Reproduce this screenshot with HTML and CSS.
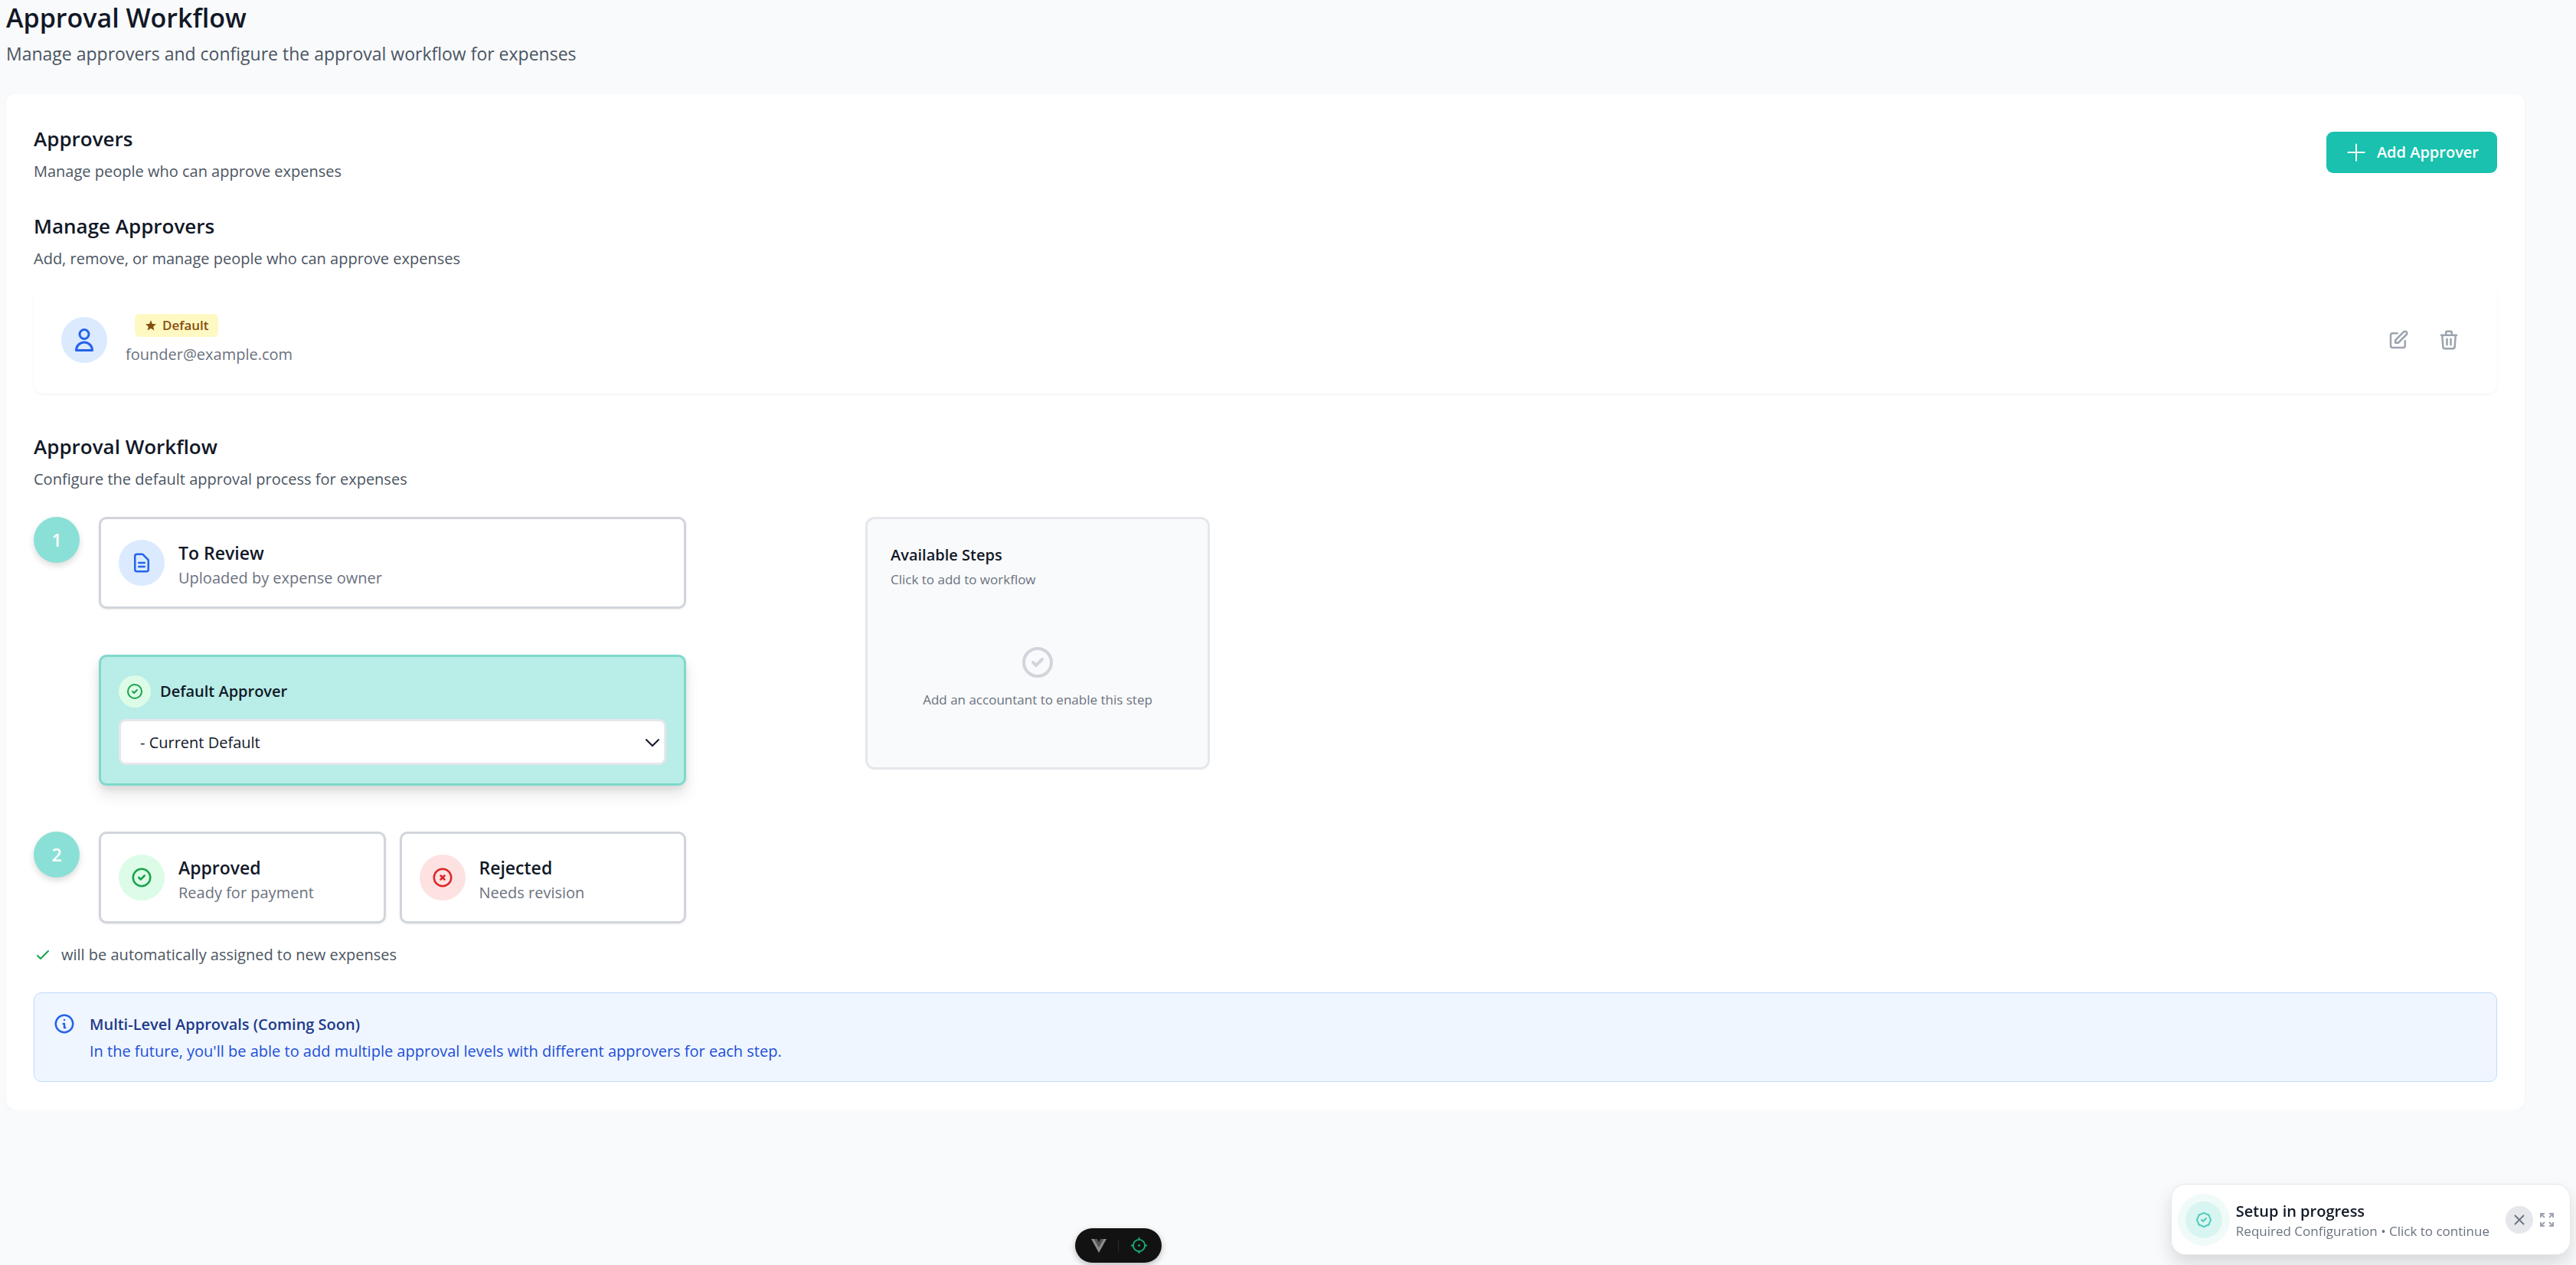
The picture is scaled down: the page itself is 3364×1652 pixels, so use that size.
FILE: index.html
```html
<!DOCTYPE html>
<html lang="en">
<head>
  <meta charset="UTF-8">
  <meta name="viewport" content="width=device-width, initial-scale=1.0">
  <title>Approval Workflow</title>
  <link rel="stylesheet" href="styles.css">
</head>
<body>

  <main class="page">
    <header class="page-header">
      <h1>Approval Workflow</h1>
      <p>Manage approvers and configure the approval workflow for expenses</p>
    </header>

    <div class="panel">
      <section class="section-head">
        <div>
          <h2>Approvers</h2>
          <p class="sub">Manage people who can approve expenses</p>
        </div>
        <button type="button" class="btn-primary">
          <svg class="icon" viewBox="0 0 24 24"><path stroke-width="1.6" d="M12 3.5v17M3.5 12h17"/></svg>
          Add Approver
        </button>
      </section>

      <section class="approvers">
        <h2>Manage Approvers</h2>
        <p class="sub">Add, remove, or manage people who can approve expenses</p>

        <div class="approver">
          <span class="avatar person">
            <svg class="icon" viewBox="0 0 24 24"><path d="M16 7a4 4 0 11-8 0 4 4 0 018 0zM12 14a7 7 0 00-7 7h14a7 7 0 00-7-7z"/></svg>
          </span>
          <div class="approver-info">
            <span class="badge">
              <svg viewBox="0 0 24 24"><path d="M12 3l2.6 6.200 6.600.5-5 4.300 1.600 6.500L12 17l-5.800 3.500 1.600-6.500-5-4.300 6.600-.5z"/></svg>
              Default
            </span>
            <span class="email">founder@example.com</span>
          </div>
          <div class="actions">
            <button type="button" aria-label="Edit approver">
              <svg class="icon" viewBox="0 0 24 24"><path d="M11 5H6a2 2 0 00-2 2v11a2 2 0 002 2h11a2 2 0 002-2v-5m-1.414-9.414a2 2 0 112.828 2.828L11.828 15H9v-2.828l8.586-8.586z"/></svg>
            </button>
            <button type="button" aria-label="Delete approver">
              <svg class="icon" viewBox="0 0 24 24"><path d="M19 7l-.867 12.142A2 2 0 0116.138 21H7.862a2 2 0 01-1.995-1.858L5 7m5 4v6m4-6v6m1-10V4a1 1 0 00-1-1h-4a1 1 0 00-1 1v3M4 7h16"/></svg>
            </button>
          </div>
        </div>
      </section>

      <section class="workflow">
        <h2>Approval Workflow</h2>
        <p class="sub">Configure the default approval process for expenses</p>

        <div class="board">
          <div class="steps">
            <span class="number">1</span>
            <div class="step">
              <span class="avatar blue">
                <svg class="icon" viewBox="0 0 24 24"><path d="M9 12h6m-6 4h6m2 5H7a2 2 0 01-2-2V5a2 2 0 012-2h5.586a1 1 0 01.707.293l5.414 5.414a1 1 0 01.293.707V19a2 2 0 01-2 2z"/></svg>
              </span>
              <div class="step-text">
                <h3>To Review</h3>
                <p>Uploaded by expense owner</p>
              </div>
            </div>

            <div class="step-default">
              <label for="approver">
                <span class="avatar green mini">
                  <svg class="icon" viewBox="0 0 24 24"><path d="M9 12l2 2 4-4m6 2a9 9 0 11-18 0 9 9 0 0118 0z"/></svg>
                </span>
                Default Approver
              </label>
              <div class="select-wrap">
                <select id="approver">
                  <option>- Current Default</option>
                </select>
                <svg class="icon" viewBox="0 0 24 24"><path d="M4 8l8 8 8-8"/></svg>
              </div>
            </div>

            <span class="number">2</span>
            <div class="outcomes">
              <div class="step">
                <span class="avatar green">
                  <svg class="icon" viewBox="0 0 24 24"><path d="M9 12l2 2 4-4m6 2a9 9 0 11-18 0 9 9 0 0118 0z"/></svg>
                </span>
                <div class="step-text">
                  <h3>Approved</h3>
                  <p>Ready for payment</p>
                </div>
              </div>
              <div class="step">
                <span class="avatar red">
                  <svg class="icon" viewBox="0 0 24 24"><path d="M10 14l2-2m0 0l2-2m-2 2l-2-2m2 2l2 2m7-2a9 9 0 11-18 0 9 9 0 0118 0z"/></svg>
                </span>
                <div class="step-text">
                  <h3>Rejected</h3>
                  <p>Needs revision</p>
                </div>
              </div>
            </div>
          </div>

          <aside class="available">
            <h3>Available Steps</h3>
            <p>Click to add to workflow</p>
            <div class="empty">
              <svg class="icon" viewBox="0 0 24 24"><path d="M9 12l2 2 4-4m6 2a9 9 0 11-18 0 9 9 0 0118 0z"/></svg>
              <p>Add an accountant to enable this step</p>
            </div>
          </aside>
        </div>

        <p class="assigned">
          <svg class="icon" viewBox="0 0 24 24"><path d="M5 13l4 4L19 7"/></svg>
          will be automatically assigned to new expenses
        </p>

        <div class="notice">
          <svg class="icon" viewBox="0 0 24 24"><path d="M13 16h-1v-4h-1m1-4h.01M21 12a9 9 0 11-18 0 9 9 0 0118 0z"/></svg>
          <div>
            <h4>Multi-Level Approvals (Coming Soon)</h4>
            <p>In the future, you'll be able to add multiple approval levels with different approvers for each step.</p>
          </div>
        </div>
      </section>
    </div>
  </main>

  <div class="setup">
    <span class="setup-icon">
      <svg class="icon" viewBox="0 0 24 24"><path d="M9 12l2 2 4-4M7.835 4.697a3.420 3.420 0 001.946-.806 3.420 3.420 0 014.438 0 3.420 3.420 0 001.946.806 3.420 3.420 0 013.138 3.138 3.420 3.420 0 00.806 1.946 3.420 3.420 0 010 4.438 3.420 3.420 0 00-.806 1.946 3.420 3.420 0 01-3.138 3.138 3.420 3.420 0 00-1.946.806 3.420 3.420 0 01-4.438 0 3.420 3.420 0 00-1.946-.806 3.420 3.420 0 01-3.138-3.138 3.420 3.420 0 00-.806-1.946 3.420 3.420 0 010-4.438 3.420 3.420 0 00.806-1.946 3.420 3.420 0 013.138-3.138z"/></svg>
    </span>
    <div class="setup-text">
      <strong>Setup in progress</strong>
      <span>Required Configuration • Click to continue</span>
    </div>
    <button type="button" class="close" aria-label="Close">
      <svg class="icon" viewBox="0 0 24 24"><path d="M6 18L18 6M6 6l12 12"/></svg>
    </button>
    <button type="button" class="expand" aria-label="Expand">
      <svg viewBox="0 0 18 18"><path d="M1 6V1h5M1 1l5 5M12 1h5v5M17 1l-5 5M1 12v5h5M1 17l5-5M17 12v5h-5M17 17l-5-5"/></svg>
    </button>
  </div>

  <div class="devtools">
    <button type="button" aria-label="Toggle devtools">
      <svg viewBox="0 0 20 18"><path fill="#8b8b8b" d="M0 0h4l6 10.500L16 0h4L10 18z"/><path fill="#555" d="M4 0h3.700L10 4l2.300-4H16l-6 10.500z"/></svg>
    </button>
    <span class="divider"></span>
    <button type="button" aria-label="Inspect component">
      <svg viewBox="0 0 24 24"><g fill="none" stroke="#1aab73" stroke-width="2"><circle cx="12" cy="12" r="8"/><path d="M12 1v4M12 19v4M1 12h4M19 12h4"/></g><circle cx="12" cy="12" r="1.500" fill="#1aab73"/></svg>
    </button>
  </div>

</body>
</html>
```

FILE: styles.css
```css
* {
  box-sizing: border-box;
}

body {
  margin: 0;
  background: #f9fafb;
  color: #111827;
  font-family: "Open Sans", sans-serif;
  font-size: 20px;
  line-height: 30px;
}

h1, h2, h3, h4, p {
  margin: 0;
  font-weight: 600;
}

p {
  font-weight: 400;
}

button {
  font: inherit;
  border: 0;
  padding: 0;
  background: none;
  cursor: pointer;
}

svg {
  display: block;
  flex: none;
}

.icon {
  width: 30px;
  height: 30px;
  fill: none;
  stroke: currentColor;
  stroke-width: 2;
  stroke-linecap: round;
  stroke-linejoin: round;
}

.page {
  padding: 0 67px 0 8px;
}

.page-header h1 {
  font-size: 34px;
  line-height: 46px;
}

.page-header p {
  margin-top: 6px;
  font-size: 23px;
  line-height: 36px;
  color: #4b5563;
}

.panel {
  margin-top: 35px;
  padding: 36px;
  background: #fff;
  border-radius: 12px;
  box-shadow: 0 1px 3px rgba(0, 0, 0, 0.06);
}

h2 {
  font-size: 26px;
  line-height: 44px;
}

.sub {
  margin-top: 6px;
  color: #4b5563;
}

.section-head {
  display: flex;
  justify-content: space-between;
  align-items: center;
}

.btn-primary {
  display: flex;
  align-items: center;
  gap: 12px;
  height: 54px;
  padding: 0 24px;
  border-radius: 9px;
  background: #19c1ae;
  color: #fff;
  font-weight: 600;
}

.approvers {
  margin-top: 34px;
}

.workflow {
  margin-top: 47px;
}

.approver {
  display: flex;
  align-items: center;
  gap: 24px;
  height: 140px;
  margin-top: 21px;
  padding: 0 36px;
  border-radius: 12px;
  box-shadow: 0 1px 3px rgba(0, 0, 0, 0.06);
}

.avatar {
  display: flex;
  flex: none;
  align-items: center;
  justify-content: center;
  width: 60px;
  height: 60px;
  border-radius: 50%;
}

.avatar.mini {
  width: 42px;
  height: 42px;
}

.avatar.mini .icon {
  width: 24px;
  height: 24px;
}

.avatar.person .icon {
  width: 36px;
  height: 36px;
}

.blue,
.person {
  background: #dbeafe;
  color: #2563eb;
}

.green {
  background: #dcfce7;
  color: #16a34a;
}

.red {
  background: #fee2e2;
  color: #dc2626;
}

.approver-info {
  display: flex;
  flex-direction: column;
  align-items: flex-start;
  gap: 8px;
  flex: 1;
}

.badge {
  display: flex;
  align-items: center;
  gap: 6px;
  margin-left: 12px;
  padding: 0 12px;
  border-radius: 6px;
  background: #fef9c3;
  color: #854d0e;
  font-size: 17px;
  font-weight: 600;
}

.badge svg {
  width: 18px;
  height: 18px;
  fill: currentColor;
}

.email {
  color: #6b7280;
}

.actions {
  display: flex;
  gap: 12px;
}

.actions button {
  padding: 12px;
  color: #9ca3af;
}

.board {
  display: flex;
  align-items: flex-start;
  justify-content: space-between;
  max-width: 1536px;
  margin-top: 34px;
}

.steps {
  display: grid;
  grid-template-columns: 60px 1fr;
  column-gap: 25px;
  row-gap: 60px;
  width: 852px;
}

.number {
  display: flex;
  align-items: center;
  justify-content: center;
  width: 60px;
  height: 60px;
  border-radius: 50%;
  background: #8ae0d6;
  color: #fff;
  font-size: 23px;
  font-weight: 600;
  box-shadow: 0 4px 8px rgba(0, 0, 0, 0.14);
}

.step {
  display: flex;
  align-items: center;
  gap: 18px;
  flex: 1;
  height: 120px;
  padding: 0 23px;
  border: 3px solid #d1d5db;
  border-radius: 10px;
  background: #fff;
  box-shadow: 0 1px 3px rgba(0, 0, 0, 0.08);
}

.step-text {
  padding-top: 4px;
}

.step h3 {
  font-size: 23px;
  line-height: 36px;
}

.step p {
  color: #6b7280;
}

.step-default {
  grid-column: 2;
  padding: 24px 23px;
  border: 3px solid #7dd9cb;
  border-radius: 10px;
  background: #b9ede7;
  box-shadow: 0 12px 20px rgba(0, 0, 0, 0.1), 0 4px 8px rgba(0, 0, 0, 0.08);
}

.step-default label {
  display: flex;
  align-items: center;
  gap: 12px;
  font-weight: 600;
}

.select-wrap {
  position: relative;
  margin-top: 15px;
}

.select-wrap select {
  display: block;
  width: 100%;
  height: 60px;
  padding: 2px 25px 0;
  border: 3px solid #e5e7eb;
  border-radius: 9px;
  appearance: none;
  background: #fff;
  color: #111827;
  font: inherit;
}

.select-wrap .icon {
  position: absolute;
  top: 19px;
  right: 6px;
  width: 24px;
  height: 24px;
  pointer-events: none;
}

.outcomes {
  display: flex;
  gap: 18px;
}

.available {
  width: 450px;
  height: 330px;
  padding: 30px;
  border: 3px solid #e5e7eb;
  border-radius: 12px;
  background: #f9fafb;
}

.available h3 {
  font-size: 20px;
  line-height: 34px;
}

.available p {
  font-size: 17px;
  color: #6b7280;
}

.empty {
  display: flex;
  flex-direction: column;
  align-items: center;
  padding-top: 69px;
}

.empty .icon {
  width: 48px;
  height: 48px;
  color: #d1d5db;
}

.empty p {
  margin-top: 10px;
}

.assigned {
  display: flex;
  align-items: center;
  gap: 12px;
  margin-top: 26px;
  color: #4b5563;
}

.assigned .icon {
  width: 24px;
  height: 24px;
  color: #16a34a;
}

.notice {
  display: flex;
  gap: 18px;
  margin-top: 34px;
  padding: 25px 24px 24px;
  border: 1px solid #bfdbfe;
  border-radius: 10px;
  background: #eff6ff;
  color: #1d4ed8;
}

.notice .icon {
  color: #2563eb;
}

.notice h4 {
  line-height: 32px;
  color: #1e3a8a;
}

.notice p {
  margin-top: 4px;
}

.setup {
  position: fixed;
  right: 8px;
  bottom: 14px;
  display: flex;
  align-items: center;
  height: 91px;
  padding: 0 21px 0 18px;
  border-radius: 18px;
  background: #fff;
  box-shadow: 0 0 0 1px #e5e7eb, 0 12px 24px rgba(0, 0, 0, 0.14);
}

.setup-icon {
  display: flex;
  align-items: center;
  justify-content: center;
  width: 48px;
  height: 48px;
  border-radius: 50%;
  background: #d9f5f1;
  color: #4fcabb;
  box-shadow: 0 0 0 10px #f0fbf9;
}

.setup-icon .icon {
  width: 24px;
  height: 24px;
}

.setup-text {
  display: flex;
  flex-direction: column;
  margin: 0 21px 0 18px;
  padding-top: 4px;
  line-height: 26px;
}

.setup-text strong {
  font-weight: 600;
}

.setup-text span {
  font-size: 17px;
  color: #6b7280;
}

.close {
  display: flex;
  align-items: center;
  justify-content: center;
  width: 36px;
  height: 36px;
  border-radius: 50%;
  background: #e5e7eb;
  color: #6b7280;
}

.close .icon {
  width: 22px;
  height: 22px;
}

.expand {
  margin-left: 9px;
}

.expand svg {
  width: 18px;
  height: 18px;
  fill: none;
  stroke: #9ca3af;
  stroke-width: 2;
}

.devtools {
  position: fixed;
  bottom: 3px;
  left: 1404px;
  display: flex;
  align-items: center;
  justify-content: space-between;
  width: 113px;
  height: 45px;
  padding: 0 18px 0 21px;
  border-radius: 23px;
  background: #121212;
  box-shadow: 0 3px 9px rgba(0, 0, 0, 0.25);
}

.devtools button:first-child svg {
  width: 20px;
  height: 18px;
}

.devtools button:last-child svg {
  width: 23px;
  height: 23px;
}

.divider {
  width: 1px;
  height: 15px;
  background: #2c2c2c;
}
```
